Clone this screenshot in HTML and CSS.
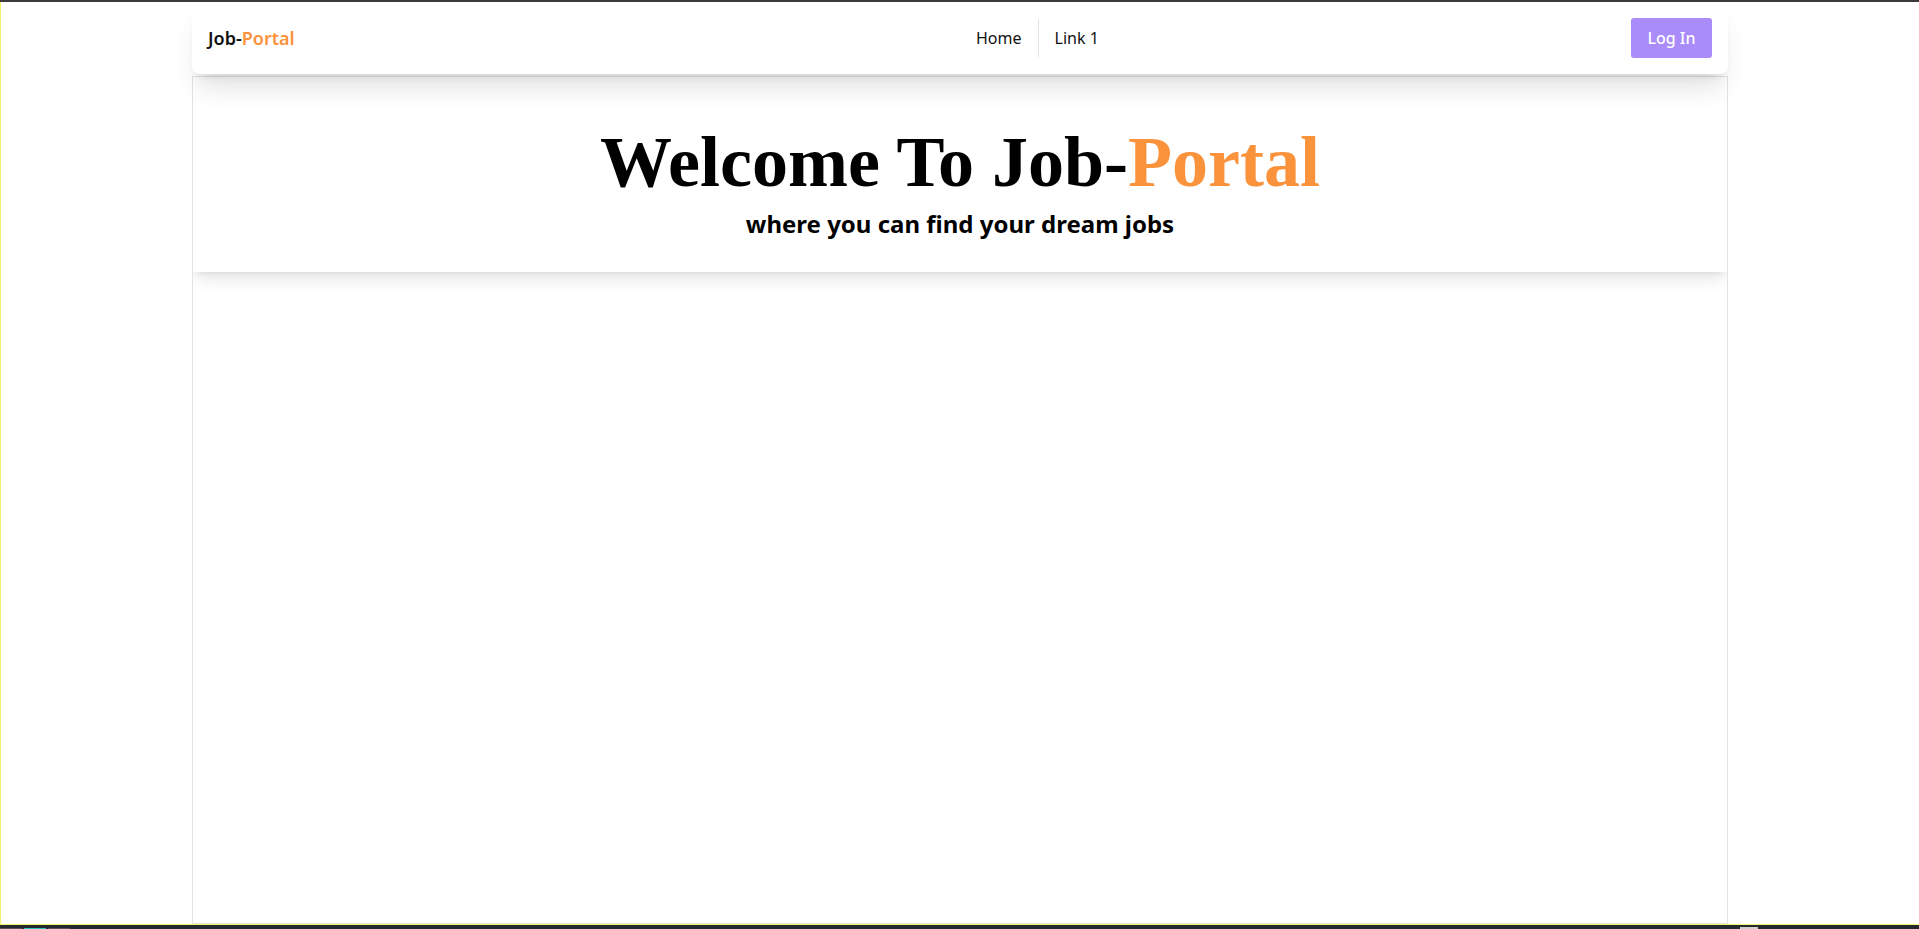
FILE: index.html
```html
<!DOCTYPE html>
<html lang="en">
<head>
<meta charset="utf-8">
<title>Job-Portal</title>
<link rel="stylesheet" href="styles.css">
</head>
<body>
<div class="topstrip"></div>
<div class="frame">
  <div class="container">
    <nav class="navbar">
      <div class="nav-start">
        <a class="logo" href="#">Job-<span class="accent">Portal</span></a>
      </div>
      <div class="nav-end">
        <ul class="menu">
          <li><a href="#">Home</a></li>
          <li class="sep"></li>
          <li><a href="#">Link 1</a></li>
        </ul>
        <button class="btn-login">Log In</button>
      </div>
    </nav>
    <main class="card">
      <section class="hero">
        <h1 class="hero-title">Welcome To Job-<span class="accent">Portal</span></h1>
        <p class="hero-sub">where you can find your dream jobs</p>
      </section>
    </main>
  </div>
</div>
<div class="taskbar">
  <div class="tb-left">
    <span class="tb-item"></span>
    <span class="tb-item tb-active"></span>
    <span class="tb-item"></span>
  </div>
  <div class="tb-right">
    <span class="tb-square"></span>
  </div>
</div>
</body>
</html>
```

FILE: styles.css
```css
* { box-sizing: border-box; }
html, body {
  margin: 0;
  padding: 0;
  height: 929px;
  overflow: hidden;
  background: #ffffff;
  font-family: "Noto Sans", "Open Sans", sans-serif;
  color: #000;
}
.topstrip {
  height: 2px;
  background: #3a3a3a;
}
.frame {
  height: 923px;
  border-left: 1px solid #f5f36a;
  border-bottom: 1px solid #f5f36a;
  display: flex;
  justify-content: center;
}
.container {
  width: 1536px;
  display: flex;
  flex-direction: column;
}
.navbar {
  position: relative;
  z-index: 2;
  height: 72px;
  background: #fff;
  border-radius: 8px;
  box-shadow: 0 20px 25px -5px rgba(0,0,0,0.10), 0 8px 10px -6px rgba(0,0,0,0.10);
  display: flex;
  align-items: center;
  padding: 0 16px;
}
.nav-start {
  width: 50%;
  display: flex;
  align-items: center;
}
.logo {
  font-size: 18px;
  font-weight: 600;
  color: #111;
  text-decoration: none;
}
.accent { color: #fb923c; }
.nav-end {
  flex: 1;
  display: flex;
  align-items: center;
}
.menu {
  list-style: none;
  margin: 0;
  padding: 0;
  display: flex;
  align-items: center;
}
.menu a {
  display: block;
  padding: 8px 16px;
  font-size: 16px;
  font-weight: 400;
  color: #111;
  text-decoration: none;
}
.menu .sep {
  width: 1px;
  height: 38px;
  background: #e2e2e4;
}
.btn-login {
  margin-left: auto;
  width: 81px;
  height: 40px;
  border: none;
  border-radius: 3px;
  background: #a98bf9;
  color: #fff;
  font-family: "Noto Sans", sans-serif;
  font-size: 16px;
  font-weight: 500;
  cursor: pointer;
}
.card {
  position: relative;
  z-index: 1;
  flex: 1;
  margin-top: 2px;
  border: 1px solid #e3e3e6;
  overflow: hidden;
  background: #fff;
}
.hero {
  background: #fff;
  box-shadow: 0 10px 15px -3px rgba(0,0,0,0.10), 0 4px 6px -4px rgba(0,0,0,0.10);
  text-align: center;
  padding: 49px 16px 32px;
}
.hero-title {
  margin: 0;
  font-family: "Liberation Serif", "Times New Roman", serif;
  font-weight: 700;
  font-size: 72px;
  line-height: 72px;
}
.hero-sub {
  margin: 10px 0 0;
  font-size: 24px;
  line-height: 32px;
  font-weight: 700;
}
.taskbar {
  height: 4px;
  background: #222a30;
  display: flex;
  justify-content: space-between;
  align-items: flex-end;
}
.tb-left { display: flex; gap: 2px; height: 1px; }
.tb-item {
  width: 22px;
  height: 1px;
  background: #555;
}
.tb-active { background: #2ec4b6; }
.tb-right { padding-right: 161px; height: 2px; }
.tb-square { display: block; width: 18px; height: 2px; background: #cfcfcf; }
```
